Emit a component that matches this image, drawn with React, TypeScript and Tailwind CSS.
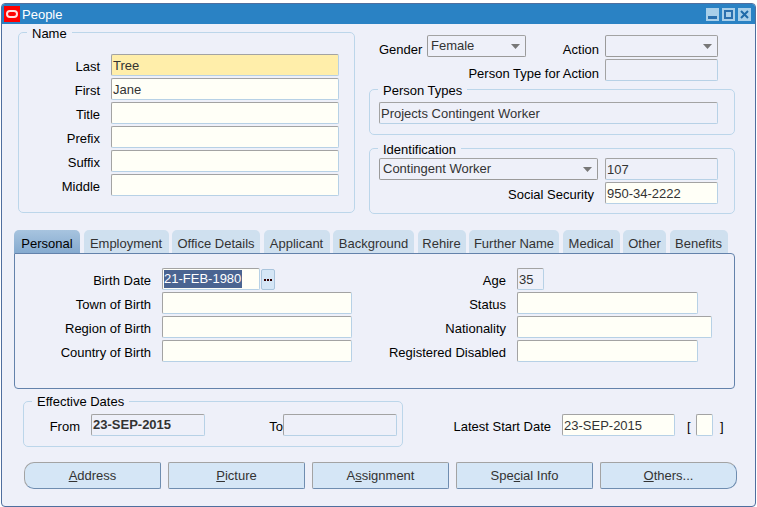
const labelCls = "h-[22px] text-right text-black leading-[22px] pt-[2px] whitespace-nowrap";

const Field = ({
  value,
  w,
  tone = "edit",
}: {
  value?: string;
  w: string;
  tone?: "edit" | "readonly" | "current";
}) => {
  const bg = tone === "edit" ? "bg-[#fffff7]" : tone === "current" ? "bg-[#ffeeaa]" : "bg-[#eef0f9]";
  return (
    <div
      className={`${w} ${bg} h-[22px] shrink-0 rounded-[2px] border border-[#b7d1e6] border-t-[#a3a3a3] border-l-[#a3a3a3] pl-px text-[#333] leading-[21px] whitespace-nowrap overflow-hidden`}
    >
      {value}
    </div>
  );
};

const Select = ({ value, w }: { value?: string; w: string }) => (
  <div
    className={`${w} h-[22px] shrink-0 flex items-center justify-between rounded-[2px] border border-[#9a9a9a] border-t-[#a3a3a3] pl-[3px] pr-[4px] text-[#333] bg-[#eef0f9]`}
  >
    <span>{value}</span>
    <svg width="9" height="5" viewBox="0 0 9 5" className="mr-px">
      <path d="M0 0h9L4.5 5z" fill="#777" />
    </svg>
  </div>
);

const Group = ({
  title,
  className,
  legendTop = "top-[-7px]",
  children,
}: {
  title: string;
  className: string;
  legendTop?: string;
  children?: React.ReactNode;
}) => (
  <div className={`relative shrink-0 rounded-[5px] border border-[#bcd6ea] ${className}`}>
    <span className={`absolute left-[8px] ${legendTop} bg-[#eef0f9] px-[5px] leading-[16px] text-black`}>{title}</span>
    {children}
  </div>
);

const NameRow = ({ label, value, tone }: { label: string; value?: string; tone?: "current" }) => (
  <div className="flex">
    <div className={`${labelCls} w-[81px]`}>{label}</div>
    <div className="ml-[11px]">
      <Field w="w-[228px]" value={value} tone={tone} />
    </div>
  </div>
);

const BirthRow = ({ label, children }: { label: string; children: React.ReactNode }) => (
  <div className="flex">
    <div className={`${labelCls} w-[136px]`}>{label}</div>
    <div className="ml-[11px] flex">{children}</div>
  </div>
);

const InfoRow = ({ label, children }: { label: string; children: React.ReactNode }) => (
  <div className="flex">
    <div className={`${labelCls} w-[154px]`}>{label}</div>
    <div className="ml-[11px]">{children}</div>
  </div>
);

const tabs = [
  { name: "Personal", w: "w-[66px]" },
  { name: "Employment", w: "w-[85px]" },
  { name: "Office Details", w: "w-[88px]" },
  { name: "Applicant", w: "w-[66px]" },
  { name: "Background", w: "w-[81px]" },
  { name: "Rehire", w: "w-[48px]" },
  { name: "Further Name", w: "w-[90px]" },
  { name: "Medical", w: "w-[57px]" },
  { name: "Other", w: "w-[43px]" },
  { name: "Benefits", w: "w-[58px]" },
];

const ActionButton = ({ children, className }: { children: React.ReactNode; className?: string }) => (
  <div
    className={`w-[137px] h-[27px] rounded-[2px] border border-[#a3a3a3] border-r-[#6f8db0] border-b-[#6f8db0] bg-[#d5e6f6] text-[#333] flex items-center justify-center ${className ?? ""}`}
  >
    <span>{children}</span>
  </div>
);

const App = () => {
  return (
    <div
      className="w-[757px] h-[507px] bg-white pt-[3px] pl-px overflow-hidden text-[13px]"
      style={{ fontFamily: '"Liberation Sans", Arial, sans-serif' }}
    >
      <div className="w-[755px] h-[504px] rounded-[4px] border border-[#4f6f9f] bg-[#eef0f9] overflow-hidden">
        {/* title bar */}
        <div className="h-[20px] bg-[#2a82c4] flex items-center">
          <div className="ml-[2px] w-[16px] h-[16px] bg-[#ff0000] flex items-center justify-center">
            <div className="w-[12px] h-[8px] rounded-full border-2 border-[#ffe0e0]" />
          </div>
          <span className="ml-[2px] mt-px text-white">People</span>
          <div className="ml-auto mr-[4px] flex gap-[3px]">
            <div className="w-[13px] h-[13px] bg-[#a9cfe9] flex items-end justify-center pb-[2px]">
              <div className="w-[9px] h-[3px] bg-[#2a6fae]" />
            </div>
            <div className="w-[13px] h-[13px] bg-[#a9cfe9] flex items-center justify-center">
              <div className="w-[9px] h-[9px] border-2 border-[#2a6fae]" />
            </div>
            <div className="w-[13px] h-[13px] bg-[#a9cfe9] flex items-center justify-center">
              <svg width="9" height="9" viewBox="0 0 9 9">
                <path d="M1 1l7 7M8 1L1 8" stroke="#1f6aa8" strokeWidth="2" />
              </svg>
            </div>
          </div>
        </div>

        {/* name + person details */}
        <div className="flex pt-[8px] pl-[16px]">
          <Group title="Name" className="w-[337px] h-[181px] pt-[21px] flex flex-col gap-[2px]">
            <NameRow label="Last" value="Tree" tone="current" />
            <NameRow label="First" value="Jane" />
            <NameRow label="Title" />
            <NameRow label="Prefix" />
            <NameRow label="Suffix" />
            <NameRow label="Middle" />
          </Group>

          <div className="ml-[14px] w-[366px]">
            <div className="pl-[10px] pt-[3px] flex">
              <div className="h-[22px] leading-[22px] pt-[4px] w-[48px] text-black">Gender</div>
              <Select w="w-[99px]" value="Female" />
              <div className={`${labelCls} !pt-[4px] w-[73px]`}>Action</div>
              <div className="ml-[6px]">
                <Select w="w-[113px]" />
              </div>
            </div>
            <div className="flex justify-end pr-[17px] mt-[2px] gap-[6px]">
              <div className={`${labelCls} !pt-[4px]`}>Person Type for Action</div>
              <Field w="w-[113px]" tone="readonly" />
            </div>
            <Group title="Person Types" className="w-[366px] h-[46px] mt-[8px] pt-[12px] pl-[9px]">
              <Field w="w-[339px]" tone="readonly" value="Projects Contingent Worker" />
            </Group>
            <Group title="Identification" className="w-[366px] h-[66px] mt-[13px] pt-[9px] pl-[9px]">
              <div className="flex gap-[7px]">
                <Select w="w-[219px]" value="Contingent Worker" />
                <Field w="w-[113px]" tone="readonly" value="107" />
              </div>
              <div className="flex mt-[2px]">
                <div className={`${labelCls} w-[215px]`}>Social Security</div>
                <div className="ml-[11px]">
                  <Field w="w-[113px]" value="950-34-2222" />
                </div>
              </div>
            </Group>
          </div>
        </div>

        {/* tabs */}
        <div className="ml-[12px] mt-[16px] w-[721px]">
          <div className="flex gap-[3.5px] h-[23px]">
            {tabs.map((t, i) => (
              <div
                key={t.name}
                className={`${t.w} shrink-0 rounded-t-[5px] text-center pt-[2px] leading-[24px] ${
                  i === 0
                    ? "bg-gradient-to-b from-[#a7c4df] to-[#85aacf] text-black"
                    : "bg-[#cfe0ef] text-[#333]"
                }`}
              >
                {t.name}
              </div>
            ))}
          </div>
          <div className="h-[136px] rounded-b-[4px] rounded-tr-[4px] border border-[#6382ab] pt-[14px] grid grid-cols-[337px_1fr]">
            <div className="flex flex-col gap-[2px]">
              <BirthRow label="Birth Date">
                <div className="w-[98px] h-[22px] rounded-[2px] border border-[#b7d1e6] border-t-[#a3a3a3] border-l-[#a3a3a3] bg-[#fffff7] pl-px pt-px">
                  <span className="block w-[78px] bg-[#4a6491] text-white leading-[18px] whitespace-nowrap">
                    21-FEB-1980
                  </span>
                </div>
                <div className="ml-px w-[14px] h-[21px] mt-px rounded-[2px] border border-[#a9c4dc] bg-[#d5e6f6] flex items-center justify-center gap-px">
                  <span className="w-[2px] h-[2px] bg-[#330000]" />
                  <span className="w-[2px] h-[2px] bg-[#330000]" />
                  <span className="w-[2px] h-[2px] bg-[#330000]" />
                </div>
              </BirthRow>
              <BirthRow label="Town of Birth">
                <Field w="w-[190px]" />
              </BirthRow>
              <BirthRow label="Region of Birth">
                <Field w="w-[190px]" />
              </BirthRow>
              <BirthRow label="Country of Birth">
                <Field w="w-[190px]" />
              </BirthRow>
            </div>
            <div className="flex flex-col gap-[2px]">
              <InfoRow label="Age">
                <Field w="w-[27px]" tone="readonly" value="35" />
              </InfoRow>
              <InfoRow label="Status">
                <Field w="w-[181px]" />
              </InfoRow>
              <InfoRow label="Nationality">
                <Field w="w-[195px]" />
              </InfoRow>
              <InfoRow label="Registered Disabled">
                <Field w="w-[181px]" />
              </InfoRow>
            </div>
          </div>
        </div>

        {/* effective dates */}
        <div className="flex ml-[21px] mt-[12px]">
          <Group title="Effective Dates" legendTop="top-[-8px]" className="w-[380px] h-[46px] pt-[12px] flex">
            <div className={`${labelCls} w-[56px]`}>From</div>
            <div className="ml-[11px]">
              <div className="w-[114px] h-[22px] rounded-[2px] border border-[#b7d1e6] border-t-[#a3a3a3] border-l-[#a3a3a3] pl-px font-bold text-[#333] leading-[19px]">
                23-SEP-2015
              </div>
            </div>
            <div className={`${labelCls} w-[78px]`}>To</div>
            <Field w="w-[114px]" tone="readonly" />
          </Group>
          <div className="ml-[49px] pt-[13px] flex">
            <div className={`${labelCls} w-[99px]`}>Latest Start Date</div>
            <div className="ml-[11px]">
              <Field w="w-[113px]" value="23-SEP-2015" />
            </div>
            <div className={`${labelCls} ml-[12px] w-[9px] !text-left`}>[</div>
            <Field w="w-[17px]" />
            <div className={`${labelCls} ml-[7px] w-[9px] !text-left`}>]</div>
          </div>
        </div>

        {/* buttons */}
        <div className="flex gap-[7px] ml-[22px] mt-[15px]">
          <ActionButton className="rounded-l-[10px]">
            <u>A</u>ddress
          </ActionButton>
          <ActionButton>
            <u>P</u>icture
          </ActionButton>
          <ActionButton>
            A<u>s</u>signment
          </ActionButton>
          <ActionButton>
            Spe<u>c</u>ial Info
          </ActionButton>
          <ActionButton className="rounded-r-[10px]">
            <u>O</u>thers...
          </ActionButton>
        </div>
      </div>
    </div>
  );
};

export default App;
